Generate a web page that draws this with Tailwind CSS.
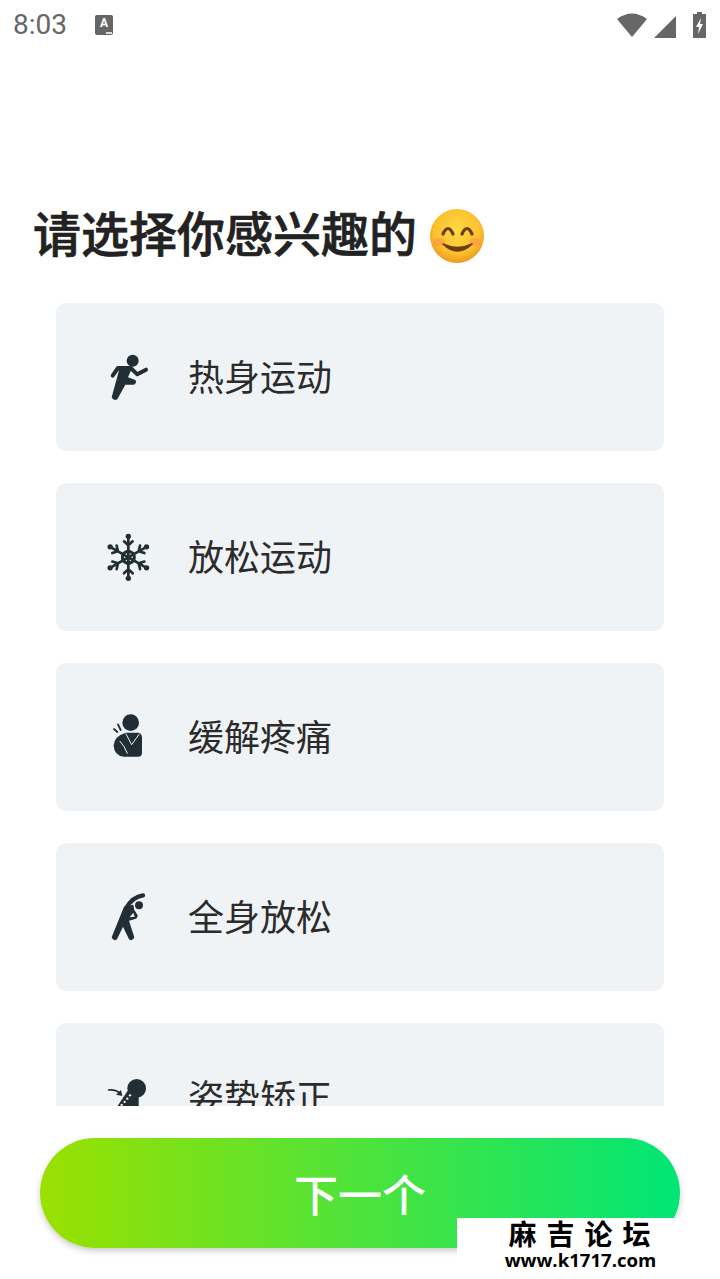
<!doctype html>
<html lang="zh-CN">
<head>
<meta charset="utf-8">
<script src="https://cdn.jsdelivr.net/npm/@tailwindcss/browser@4"></script>
</head>
<body class="bg-white">
<div class="relative w-[720px] h-[1279px] overflow-hidden flex flex-col bg-white font-['Noto_Sans_CJK_SC','Noto_Sans',sans-serif]">
  <!-- status bar -->
  <div class="h-[50px] shrink-0 flex items-center justify-between pl-[13px] pr-[14px] text-[#666]">
    <div class="flex items-center gap-[28px]">
      <span class="font-['Roboto',sans-serif] text-[28px] leading-none">8:03</span>
      <span class="relative w-[18px] h-[20px] rounded-[2px] bg-[#666] flex justify-center text-white font-['Roboto',sans-serif] font-bold text-[12px] leading-[16px]">A
        <span class="absolute right-[1px] bottom-[1px] w-[6px] h-[2px] bg-[#ddd]"></span>
      </span>
    </div>
    <div class="flex items-center gap-[7px]">
      <svg width="30" height="26" viewBox="0 0 30 26"><path d="M0 7 Q15 -4 30 7 L15 25 Z" fill="#666"/></svg>
      <svg width="22" height="22" viewBox="0 0 22 22" class="mt-[4px]"><path d="M22 0 V22 H0 Z" fill="#666"/></svg>
      <svg width="13" height="26" viewBox="0 0 13 26" class="ml-[10px]"><path d="M4 0 H9 V2 H13 V26 H0 V2 H4 Z" fill="#666"/><path d="M8 6 L3 15 H6 L5 22 L10 12 H7 Z" fill="#fff"/></svg>
    </div>
  </div>

  <!-- scroll area -->
  <div class="flex-1 min-h-0 overflow-hidden">
    <h1 class="mt-[151px] h-[60px] pl-[33px] flex items-center text-[48px] leading-[60px] font-medium text-[#222] [-webkit-text-stroke:0.7px_#222]">
      请选择你感兴趣的
      <svg width="58" height="58" viewBox="0 0 58 58" class="ml-[11px] mt-[10px]">
        <defs>
          <radialGradient id="face" cx="50%" cy="40%" r="60%">
            <stop offset="0" stop-color="#ffd944"/>
            <stop offset="0.7" stop-color="#fcc02e"/>
            <stop offset="1" stop-color="#ec9a1c"/>
          </radialGradient>
        </defs>
        <circle cx="29" cy="29" r="27" fill="url(#face)"/>
        <ellipse cx="11" cy="35" rx="6" ry="4" fill="#f98a4a" opacity=".5"/>
        <ellipse cx="47" cy="35" rx="6" ry="4" fill="#f98a4a" opacity=".5"/>
        <path d="M15 27 Q20 16 25 27 M34 27 Q39 16 44 27" fill="none" stroke="#6b3d10" stroke-width="3.2" stroke-linecap="round"/>
        <path d="M15 37 Q29.5 51 44 37 Q29.5 44 15 37 Z" fill="#6b3d10" stroke="#6b3d10" stroke-width="1.6" stroke-linejoin="round"/>
      </svg>
    </h1>

    <div class="mt-[42px] mx-[56px] flex flex-col gap-[32px]">
      <!-- 1 -->
      <div class="h-[148px] shrink-0 rounded-[10px] bg-[#eff3f6] flex items-center pl-[34px] gap-[28px] pb-[4px]">
        <svg width="70" height="70" viewBox="0 0 210 210" class="shrink-0">
          <circle cx="128" cy="62" r="18" fill="#222e35"/>
          <path d="M68 107 L84 84 L122 84 L142 103 L168 89" fill="none" stroke="#222e35" stroke-width="12" stroke-linecap="round" stroke-linejoin="round"/>
          <path d="M90 80 L128 80 L114 112 L136 120 Q142 128 132 134 L106 134 L82 178 Q70 184 65 172 Z" fill="#222e35"/>
        </svg>
        <span class="text-[36px] leading-none text-[#2b2b2b]">热身运动</span>
      </div>
      <!-- 2 -->
      <div class="h-[148px] shrink-0 rounded-[10px] bg-[#eff3f6] flex items-center pl-[34px] gap-[28px] pb-[4px]">
        <svg width="70" height="70" viewBox="0 0 210 210" class="shrink-0">
          <g fill="none" stroke="#222e35" stroke-width="8" stroke-linecap="round">
            <path d="M115 108 V52 M115 76 L102 64 M115 76 L128 64 M115 92 L104 98 M115 92 L126 98"/>
            <g transform="rotate(60 115 112)"><path d="M115 108 V52 M115 76 L102 64 M115 76 L128 64 M115 92 L104 98 M115 92 L126 98"/></g>
            <g transform="rotate(120 115 112)"><path d="M115 108 V52 M115 76 L102 64 M115 76 L128 64 M115 92 L104 98 M115 92 L126 98"/></g>
            <g transform="rotate(180 115 112)"><path d="M115 108 V52 M115 76 L102 64 M115 76 L128 64 M115 92 L104 98 M115 92 L126 98"/></g>
            <g transform="rotate(240 115 112)"><path d="M115 108 V52 M115 76 L102 64 M115 76 L128 64 M115 92 L104 98 M115 92 L126 98"/></g>
            <g transform="rotate(300 115 112)"><path d="M115 108 V52 M115 76 L102 64 M115 76 L128 64 M115 92 L104 98 M115 92 L126 98"/></g>
          </g>
          <g fill="#222e35">
            <circle cx="115" cy="49" r="8"/><circle cx="115" cy="175" r="8"/>
            <circle cx="60.4" cy="80.5" r="8"/><circle cx="169.6" cy="80.5" r="8"/>
            <circle cx="60.4" cy="143.5" r="8"/><circle cx="169.6" cy="143.5" r="8"/>
          </g>
        </svg>
        <span class="text-[36px] leading-none text-[#2b2b2b]">放松运动</span>
      </div>
      <!-- 3 -->
      <div class="h-[148px] shrink-0 rounded-[10px] bg-[#eff3f6] flex items-center pl-[34px] gap-[28px] pb-[4px]">
        <svg width="70" height="70" viewBox="0 0 210 210" class="shrink-0">
          <circle cx="122" cy="68" r="25" fill="#222e35"/>
          <path d="M108 98 L146 98 Q156 100 156 114 L156 158 Q156 170 144 170 L102 170 Q72 168 71 136 Q73 108 108 98 Z" fill="#222e35"/>
          <path d="M90 124 Q104 138 112 160 M108 102 L125 134 L148 102" fill="none" stroke="#eff3f6" stroke-width="3" stroke-linecap="round"/>
          <path d="M72 87 L82 96 M84 73 L92 90" fill="none" stroke="#222e35" stroke-width="5.5" stroke-linecap="round"/>
        </svg>
        <span class="text-[36px] leading-none text-[#2b2b2b]">缓解疼痛</span>
      </div>
      <!-- 4 -->
      <div class="h-[148px] shrink-0 rounded-[10px] bg-[#eff3f6] flex items-center pl-[34px] gap-[28px] pb-[4px]">
        <svg width="70" height="70" viewBox="0 0 210 210" class="shrink-0">
          <circle cx="147" cy="76" r="12" fill="#222e35"/>
          <path d="M159 46 Q128 50 108 85" fill="none" stroke="#222e35" stroke-width="13" stroke-linecap="round"/>
          <path d="M102 80 L130 74 L133 90 L143 106 Q143 116 133 118 L117 122 L133 172 Q128 186 117 178 L99 140 L81 178 Q70 186 65 172 Z" fill="#222e35"/>
          <path d="M119 112 L130 98 L134 110 Z" fill="#eff3f6"/>
        </svg>
        <span class="text-[36px] leading-none text-[#2b2b2b]">全身放松</span>
      </div>
      <!-- 5 -->
      <div class="h-[148px] shrink-0 rounded-[10px] bg-[#eff3f6] flex items-center pl-[34px] gap-[28px] pb-[4px]">
        <svg width="70" height="70" viewBox="0 0 210 210" class="shrink-0">
          <circle cx="140" cy="85" r="28" fill="#222e35"/>
          <path d="M116 88 L80 142 L146 142 L146 108 Z" fill="#222e35"/>
          <path d="M56 90 Q78 88 90 100" fill="none" stroke="#222e35" stroke-width="5" stroke-linecap="round"/>
          <path d="M97 108 L78 104 L93 90 Z" fill="#222e35"/>
          <g fill="#eff3f6"><circle cx="120" cy="106" r="3.5"/><circle cx="112" cy="116" r="3.5"/><circle cx="104" cy="126" r="3.5"/><circle cx="95" cy="135" r="3.5"/></g>
        </svg>
        <span class="text-[36px] leading-none text-[#2b2b2b]">姿势矫正</span>
      </div>
    </div>
  </div>

  <!-- footer -->
  <div class="h-[173px] shrink-0 bg-white pt-[32px] px-[40px]">
    <button class="w-full h-[110px] rounded-full bg-linear-to-r/srgb from-[#9be000] to-[#00e676] shadow-[0_3px_6px_rgba(0,0,0,0.2)] text-white text-[44px] leading-none flex items-center justify-center font-medium">下一个</button>
  </div>

  <!-- watermark -->
  <div class="absolute left-[457px] top-[1218px] w-[263px] h-[61px] bg-white flex flex-col items-center pr-[18px] text-black font-bold">
    <span class="text-[28px] leading-[30px] tracking-[10px] pl-[10px]">麻吉论坛</span>
    <span class="font-['Open_Sans',sans-serif] text-[18.6px] leading-[24px] pl-[2px]">www.k1717.com</span>
  </div>
</div>
</body>
</html>
